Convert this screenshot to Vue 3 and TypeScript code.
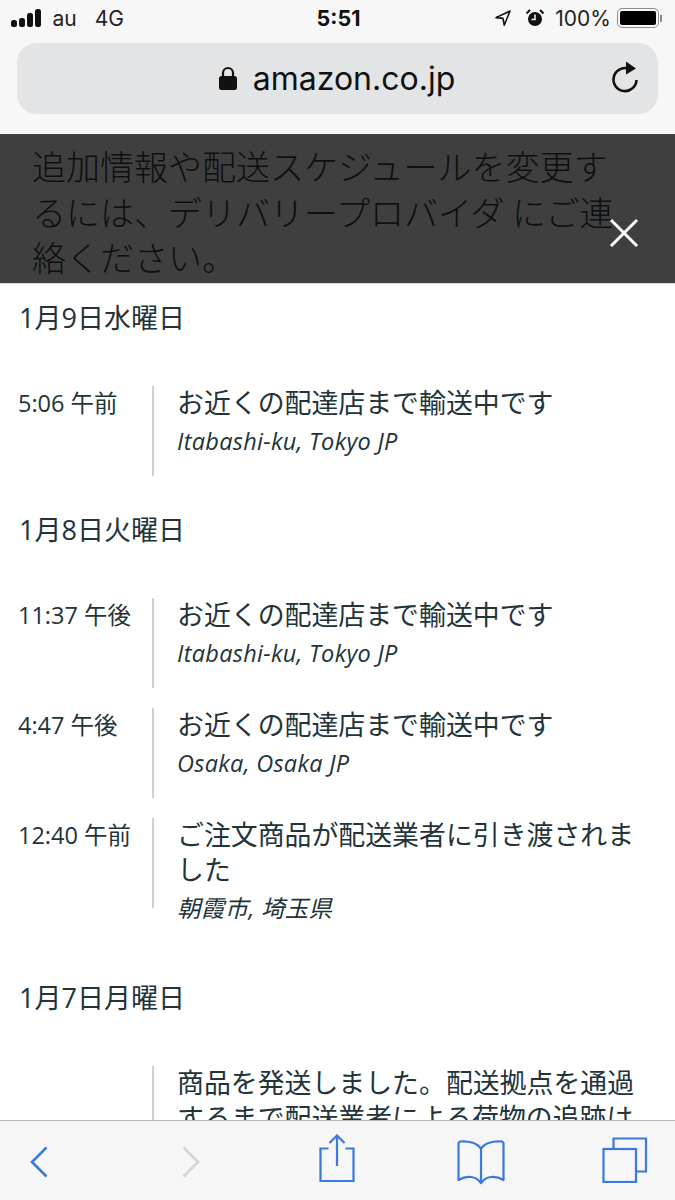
<script setup lang="ts">
interface Entry { time: string; title: string; place: string }
interface Day { date: string; entries: Entry[] }
const days: Day[] = [
  { date: '1月9日水曜日', entries: [
    { time: '5:06 午前', title: 'お近くの配達店まで輸送中です', place: 'Itabashi-ku, Tokyo JP' },
  ] },
  { date: '1月8日火曜日', entries: [
    { time: '11:37 午後', title: 'お近くの配達店まで輸送中です', place: 'Itabashi-ku, Tokyo JP' },
    { time: '4:47 午後', title: 'お近くの配達店まで輸送中です', place: 'Osaka, Osaka JP' },
    { time: '12:40 午前', title: 'ご注文商品が配送業者に引き渡されました', place: '朝霞市, 埼玉県' },
  ] },
  { date: '1月7日月曜日', entries: [
    { time: '', title: '商品を発送しました。配送拠点を通過するまで配送業者による荷物の追跡は', place: '' },
  ] },
]
</script>

<template>
  <div class="screen">
    <header class="chrome">
      <div class="status">
        <div class="status-left">
          <span class="signal"><i class="b1"></i><i class="b2"></i><i class="b3"></i><i class="b4"></i></span>
          <span class="carrier">au</span>
          <span class="carrier net">4G</span>
        </div>
        <div class="clock">5:51</div>
        <div class="status-right">
          <svg class="loc" width="18" height="18" viewBox="0 0 18 18"><path d="M16 2 2 8.600l7 .8 1.200 6.800z" fill="none" stroke="#111" stroke-width="1.600" stroke-linejoin="round"/></svg>
          <svg class="alarm" width="20" height="20" viewBox="0 0 20 20"><circle cx="10" cy="11" r="7" fill="#111"/><path d="M10 6.500V11.500H6.500" fill="none" stroke="#f7f7f7" stroke-width="1.500"/><path d="M1.500 5.500 5 2M18.500 5.500 15 2" stroke="#111" stroke-width="2"/></svg>
          <span class="pct">100%</span>
          <span class="battery"><span class="fill"></span></span>
          <span class="nub"></span>
        </div>
      </div>
      <div class="urlbar">
        <div class="url">
          <svg width="20" height="25" viewBox="0 0 20 25"><path d="M5 11V7a5 5 0 0 1 10 0v4" fill="none" stroke="#111" stroke-width="2.200"/><rect x="1" y="10" width="18" height="14" rx="2.500" fill="#111"/></svg>
          <span>amazon.co.jp</span>
        </div>
        <svg class="reload" width="30" height="34" viewBox="0 0 30 34"><path d="M18 8.500A11.500 11.500 0 1 0 26.500 20" fill="none" stroke="#111" stroke-width="2.600"/><path d="M16 1.500 26 8.500 16 14.500z" fill="#111"/></svg>
      </div>
    </header>

    <div class="banner">
      <p>追加情報や配送スケジュールを変更するには、デリバリープロバイダ にご連絡ください。</p>
      <svg class="close" width="30" height="30" viewBox="0 0 30 30"><path d="M2 2 28 28M28 2 2 28" stroke="#fff" stroke-width="3"/></svg>
    </div>

    <main class="content">
      <section v-for="day in days" :key="day.date" class="day">
        <h2 class="date">{{ day.date }}</h2>
        <div class="entries">
          <div v-for="(e, i) in day.entries" :key="i" class="entry">
            <div class="time">{{ e.time }}</div>
            <div class="detail">
              <div class="title">{{ e.title }}</div>
              <div v-if="e.place" class="place">{{ e.place }}</div>
            </div>
          </div>
        </div>
      </section>
    </main>

    <footer class="toolbar">
      <svg class="t-back" width="18" height="32" viewBox="0 0 18 32"><path d="M16.500 1.500 2 16l14.500 14.500" fill="none" stroke="#3b78e0" stroke-width="2.600"/></svg>
      <svg class="t-fwd" width="18" height="32" viewBox="0 0 18 32"><path d="M1.500 1.500 16 16 1.500 30.500" fill="none" stroke="#d4d5d7" stroke-width="2.600"/></svg>
      <svg class="t-share" width="36" height="48" viewBox="0 0 36 48"><path d="M9.500 14.500H1.500V47H34.500V14.500H26.500M18 32V2M10.500 9 18 1.500 25.500 9" fill="none" stroke="#3b78e0" stroke-width="2.200"/></svg>
      <svg class="t-book" width="48" height="46" viewBox="0 0 48 46"><path d="M24 10C21 4.500 12 1.500 3 2.500L1.500 4V41C10 36 19 37 24 44 29 37 38 36 46.500 41V4L45 2.500C36 1.500 27 4.500 24 10ZM24 10V44" fill="none" stroke="#3b78e0" stroke-width="2.200" stroke-linejoin="round"/></svg>
      <svg class="t-tabs" width="46" height="46" viewBox="0 0 46 46"><path d="M11.500 12V1.500H44V34.500H34" fill="none" stroke="#3b78e0" stroke-width="2.200"/><rect x="1.500" y="12" width="32.500" height="33" fill="none" stroke="#3b78e0" stroke-width="2.200"/></svg>
    </footer>
  </div>
</template>

<style scoped>
.screen {
  width: 675px;
  height: 1200px;
  display: flex;
  flex-direction: column;
  overflow: hidden;
  background: #fff;
  font-family: "Open Sans", "Noto Sans CJK JP", sans-serif;
}
.chrome {
  flex: none;
  height: 134px;
  background: #f7f7f7;
  padding: 0 17px;
  box-sizing: border-box;
  font-family: Inter, "Liberation Sans", sans-serif;
  color: #111;
}
.status {
  height: 43px;
  margin: 0 -7px 0 -6px;
  padding-bottom: 7px;
  box-sizing: border-box;
  display: grid;
  grid-template-columns: 1fr auto 1fr;
  align-items: center;
}
.status-left { display: flex; align-items: center; }
.signal { display: flex; align-items: flex-end; gap: 2.500px; margin-right: 12px; }
.signal i { display: block; width: 5.500px; background: #111; border-radius: 2.500px; }
.b1 { height: 7px; } .b2 { height: 9px; } .b3 { height: 14px; } .b4 { height: 18px; }
.carrier { font-size: 21px; color: #222; }
.net { margin-left: 18px; }
.clock { font-size: 21.500px; font-weight: 700; margin-left: 1px; }
.status-right { display: flex; align-items: center; justify-content: flex-end; }
.loc { margin-right: 13px; }
.alarm { margin-right: 10px; }
.pct { font-size: 21px; color: #222; margin-right: 6px; }
.battery {
  width: 42px; height: 20px; box-sizing: border-box;
  border: 1.500px solid #8c8c8c; border-radius: 5px; padding: 2px; display: block;
}
.fill { display: block; height: 100%; background: #000; border-radius: 2px; }
.nub { width: 2px; height: 7px; background: #8c8c8c; margin-left: 1px; margin-right: 3px; }
.urlbar {
  height: 71px;
  background: #e3e4e6;
  border-radius: 20px;
  display: flex;
  align-items: center;
  justify-content: center;
  position: relative;
}
.url { display: flex; align-items: center; gap: 15px; font-size: 32px; color: #111; margin-left: -2px; }
.reload { position: absolute; right: 18px; top: 17px; }
.banner {
  flex: none;
  height: 150px;
  background: #3f3f3f;
  position: relative;
  overflow: hidden;
  border-bottom: 1px solid #ddd;
  box-sizing: border-box;
}
.banner p {
  margin: 0;
  padding: 9px 43px 0 32px;
  font-size: 34px;
  line-height: 45.500px;
  color: #0c1012;
  font-family: "Noto Sans CJK JP", sans-serif;
  font-weight: 300;
}
.close { position: absolute; left: 609px; top: 84px; }
.content {
  flex: 1;
  min-height: 0;
  overflow: hidden;
  color: #22333a;
}
.day { padding-bottom: 20px; }
.day:last-child { padding-top: 36px; }
.date {
  margin: 0;
  padding: 17px 0 0 19px;
  height: 83px;
  box-sizing: border-box;
  font-size: 27px;
  line-height: 34px;
  font-weight: 400;
}
.entries { display: flex; flex-direction: column; gap: 20px; padding-top: 19px; }
.entry { display: flex; }
.time {
  flex: none;
  width: 152px;
  box-sizing: border-box;
  padding: 2px 0 0 18px;
  font-size: 23.500px;
  line-height: 30px;
}
.detail {
  flex: 1;
  height: 90px;
  box-sizing: border-box;
  border-left: 2px solid #cfcfcf;
  padding-left: 24px;
  padding-right: 30px;
}
.title { font-size: 26.900px; line-height: 35px; margin: -1px 0 0 -1px; }
.place { font-size: 23.500px; font-style: italic; line-height: 36px; margin: 3px 0 0 -1px; letter-spacing: 0.3px; }
.toolbar {
  flex: none;
  height: 80px;
  background: #f6f6f7;
  border-top: 1px solid #b4b4b4;
  box-sizing: border-box;
  display: flex;
  align-items: flex-start;
  padding-left: 30px;
}
.t-back { margin-top: 25px; }
.t-fwd { margin: 25px 0 0 134px; }
.t-share { margin: 13px 0 0 119px; }
.t-book { margin: 18px 0 0 102px; }
.t-tabs { margin: 16px 0 0 97px; }
</style>
